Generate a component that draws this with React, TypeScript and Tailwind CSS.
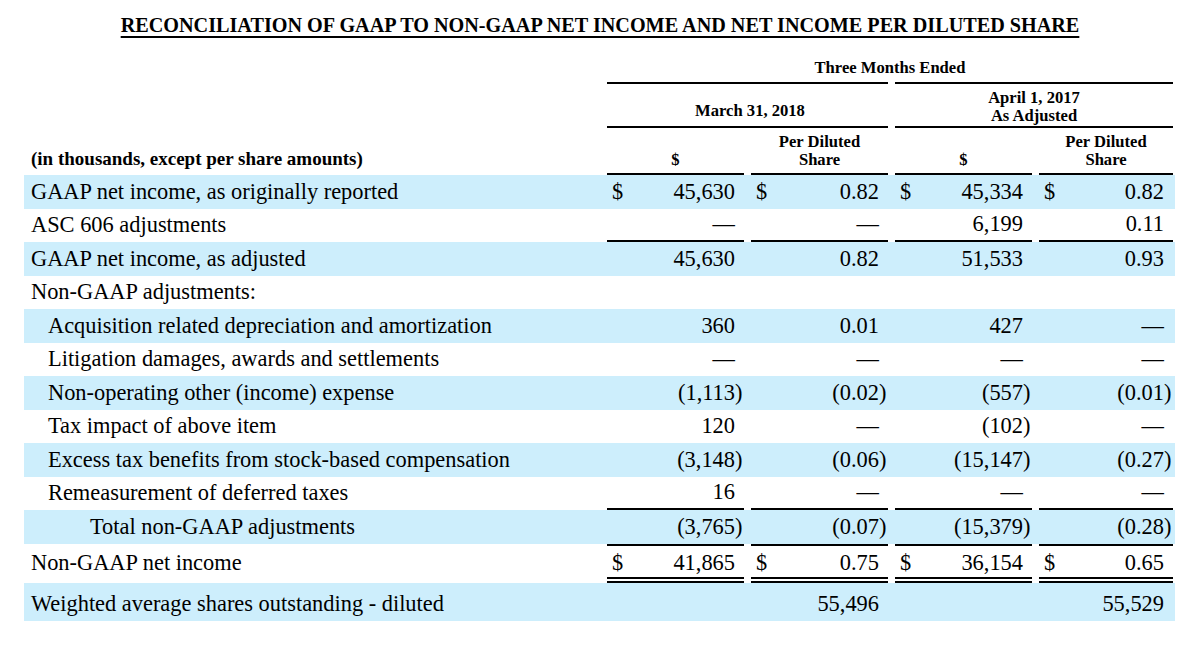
import clsx from "clsx"

type Row = {
  label: string
  vals: string[]
  blue?: boolean
  indent?: number
  dollar?: boolean
  lineBelow?: boolean
  lineAbove?: boolean
  doubleBelow?: boolean
}

const rows: Row[] = [
  { label: "GAAP net income, as originally reported", vals: ["45,630", "0.82", "45,334", "0.82"], blue: true, dollar: true },
  { label: "ASC 606 adjustments", vals: ["—", "—", "6,199", "0.11"], lineBelow: true },
  { label: "GAAP net income, as adjusted", vals: ["45,630", "0.82", "51,533", "0.93"], blue: true },
  { label: "Non-GAAP adjustments:", vals: [] },
  { label: "Acquisition related depreciation and amortization", vals: ["360", "0.01", "427", "—"], blue: true, indent: 1 },
  { label: "Litigation damages, awards and settlements", vals: ["—", "—", "—", "—"], indent: 1 },
  { label: "Non-operating other (income) expense", vals: ["(1,113)", "(0.02)", "(557)", "(0.01)"], blue: true, indent: 1 },
  { label: "Tax impact of above item", vals: ["120", "—", "(102)", "—"], indent: 1 },
  { label: "Excess tax benefits from stock-based compensation", vals: ["(3,148)", "(0.06)", "(15,147)", "(0.27)"], blue: true, indent: 1 },
  { label: "Remeasurement of deferred taxes", vals: ["16", "—", "—", "—"], indent: 1, lineBelow: true },
  { label: "Total non-GAAP adjustments", vals: ["(3,765)", "(0.07)", "(15,379)", "(0.28)"], blue: true, indent: 2 },
  { label: "Non-GAAP net income", vals: ["41,865", "0.75", "36,154", "0.65"], dollar: true, lineAbove: true, doubleBelow: true },
]

const grid = "grid grid-cols-[576px_137px_137px_137px_134px] gap-x-[7px]"

const Num = ({ v }: { v: string }) => {
  const paren = v.endsWith(")")
  return (
    <span className="flex">
      <span>{paren ? v.slice(0, -1) : v}</span>
      <span className="w-[8px]">{paren ? ")" : ""}</span>
    </span>
  )
}

const App = () => {
  return (
    <div className="w-[1200px] h-[650px] bg-white text-black font-['Liberation_Serif','Times_New_Roman',serif]">
      <div className="h-[58px] pt-[13px] text-center text-[20.2px] leading-[24px] font-bold">
        <span className="underline decoration-2 underline-offset-[4px]">
          RECONCILIATION OF GAAP TO NON-GAAP NET INCOME AND NET INCOME PER DILUTED SHARE
        </span>
      </div>

      <div className="ml-[24px] w-[1151px] pr-[2px] text-[16.6px] leading-[18px] font-bold">
        <div className={clsx(grid, "h-[24px]")}>
          <div />
          <div className="col-span-4 text-center pt-[1px]">Three Months Ended</div>
        </div>
        <div className={clsx(grid, "h-[46px]")}>
          <div />
          <div className="col-span-2 border-y-2 border-black flex flex-col justify-end items-center pb-[6px] pl-[5px]">
            March 31, 2018
          </div>
          <div className="col-span-2 border-y-2 border-black flex flex-col justify-end items-center pb-[1px]">
            <span>April 1, 2017</span>
            <span>As Adjusted</span>
          </div>
        </div>
        <div className={clsx(grid, "h-[47px]")}>
          <div className="flex items-end pl-[7px] pb-[5px] text-[19px] leading-[22px]">
            (in thousands, except per share amounts)
          </div>
          {["$", "Per Diluted|Share", "$", "Per Diluted|Share"].map((h, i) => (
            <div key={i} className="border-b-2 border-black flex flex-col justify-end items-center pb-[4px]">
              {h.split("|").map((t) => (
                <span key={t}>{t}</span>
              ))}
            </div>
          ))}
        </div>
      </div>

      <div className="ml-[24px] w-[1151px] text-[22.4px] leading-[26px]">
        {rows.map((r) => (
          <div
            key={r.label}
            className={clsx(grid, "pr-[2px]", r.blue && "bg-[#cdeefc]", r.doubleBelow ? "h-[39.5px]" : "h-[33.5px]")}
          >
            <div
              className={clsx(
                "flex items-center whitespace-nowrap",
                r.indent === 1 ? "pl-[24px]" : r.indent === 2 ? "pl-[66px]" : "pl-[7px]"
              )}
            >
              {r.label}
            </div>
            {r.vals.map((v, i) => (
              <div
                key={i}
                className={clsx(
                  "flex items-center justify-between pl-[5px] pr-[1px] border-black",
                  r.lineBelow && "border-b-2",
                  r.lineAbove && "border-t-2",
                  r.doubleBelow && "border-b-[6px] border-double pt-[4px]"
                )}
              >
                <span>{r.dollar ? "$" : ""}</span>
                <Num v={v} />
              </div>
            ))}
          </div>
        ))}
        <div className={clsx(grid, "h-[38px] pr-[2px] bg-[#cdeefc]")}>
          <div className="flex items-center pl-[7px] pt-[4px] whitespace-nowrap">
            Weighted average shares outstanding - diluted
          </div>
          <div />
          <div className="flex items-center justify-end pt-[4px] pr-[1px]">
            <Num v="55,496" />
          </div>
          <div />
          <div className="flex items-center justify-end pt-[4px] pr-[1px]">
            <Num v="55,529" />
          </div>
        </div>
      </div>
    </div>
  )
}

export default App
